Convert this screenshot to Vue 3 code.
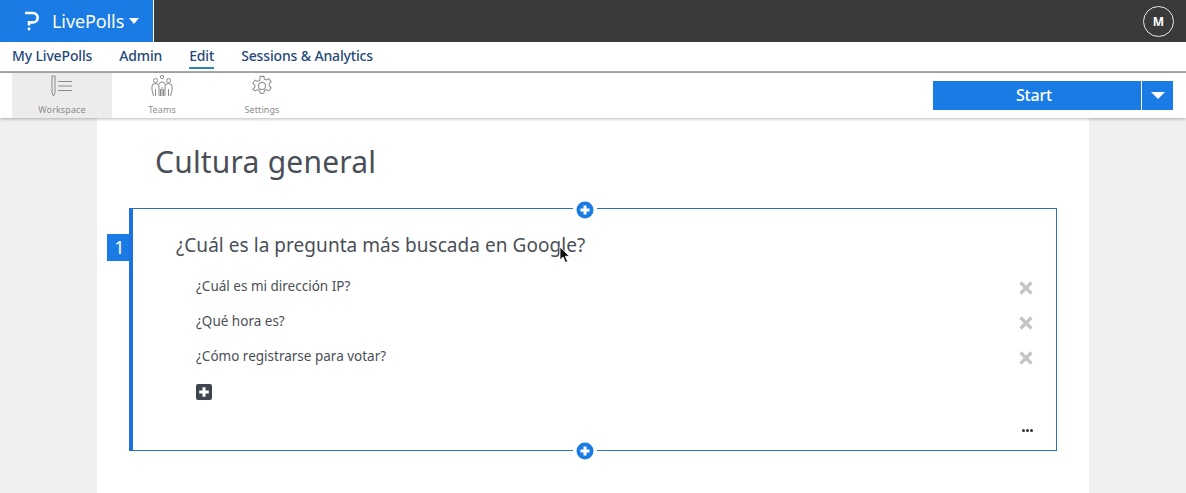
<script setup>
const tabs = [
  { key: 'w', label: 'Workspace', active: true },
  { key: 't', label: 'Teams' },
  { key: 's', label: 'Settings' }
]
const nav = ['My LivePolls', 'Admin', 'Edit', 'Sessions & Analytics']
const answers = ['¿Cuál es mi dirección IP?', '¿Qué hora es?', '¿Cómo registrarse para votar?']
</script>

<template>
  <div class="app">
    <header class="top">
      <div class="brand">
        <svg class="logo" width="14" height="20" viewBox="0 0 14 20" fill="none" stroke="#fff" stroke-width="2.6">
          <path d="M0 2h8a4.200 4.200 0 0 1 0 9.400H4v3" />
          <circle cx="4" cy="18" r="1.400" fill="#fff" stroke="none" />
        </svg>
        <span class="brand-name">LivePolls</span>
        <span class="caret"></span>
      </div>
      <div class="avatar">M</div>
    </header>

    <nav class="nav">
      <a v-for="n in nav" :key="n" class="nav-item" :class="{ on: n === 'Edit' }">{{ n }}</a>
    </nav>

    <div class="tools">
      <div v-for="t in tabs" :key="t.key" class="tab" :class="{ active: t.active }">
        <svg v-if="t.key === 'w'" width="24" height="22" viewBox="0 0 24 22" fill="none" stroke="#8a8a8a" stroke-width="1">
          <path d="M2 1h3v16.500L3.500 21 2 17.500z" />
          <path d="M8 6.500H22M8 11H22M8 15.500H22" />
        </svg>
        <svg v-else-if="t.key === 't'" width="24" height="22" viewBox="0 0 24 22" fill="none" stroke="#8a8a8a" stroke-width="1">
          <circle cx="12" cy="2" r="1.600" />
          <circle cx="5.500" cy="5.500" r="2" />
          <circle cx="18.500" cy="5.500" r="2" />
          <path d="M3.500 21l-1.500-6v-4q0-2.500 3.500-2.500T9 11v10M15 21V11q0-2.500 3.500-2.500T22 11v4l-1.500 6" />
          <path d="M9 9.500q0-2.500 3-2.500t3 2.500M12 12v9M10.500 14v7M13.500 14v7M5.500 14v7M18.500 14v7" />
        </svg>
        <svg v-else width="24" height="22" viewBox="0 0 24 24" fill="none" stroke="#8a8a8a" stroke-width="1.100">
          <path d="M10 1.500h4l.6 3 2.200 1 2.700-1.500 2.500 3.400-2.200 2.100v2.400l2.200 2.100-2.500 3.400-2.700-1.500-2.200 1-.6 3h-4l-.6-3-2.200-1-2.700 1.500L2 15.500l2.200-2.100V11L2 8.900l2.500-3.400L7.200 7l2.200-1z" />
          <circle cx="12" cy="12" r="3.800" />
        </svg>
        <span class="tab-label">{{ t.label }}</span>
      </div>
      <div class="start">
        <span class="start-main">Start</span>
        <span class="start-drop"><i class="drop-caret"></i></span>
      </div>
    </div>

    <main class="stage">
      <section class="page">
        <h1 class="title">Cultura general</h1>
        <div class="card">
          <span class="num">1</span>
          <span class="add add-top"><svg width="18" height="18" viewBox="0 0 18 18"><circle cx="9" cy="9" r="8.500" fill="#1a7be5" /><path d="M9 4.500v9M4.500 9h9" stroke="#fff" stroke-width="3" /></svg></span>
          <span class="add add-bottom"><svg width="18" height="18" viewBox="0 0 18 18"><circle cx="9" cy="9" r="8.500" fill="#1a7be5" /><path d="M9 4.500v9M4.500 9h9" stroke="#fff" stroke-width="3" /></svg></span>
          <svg class="cursor" width="12" height="18" viewBox="0 0 12 18"><path d="M1 1v13l3.200-3 2.200 5.500 2.200-.9-2.200-5.300H10.500z" fill="#111" stroke="#fff" stroke-width=".8" /></svg>

          <h2 class="question">¿Cuál es la pregunta más buscada en Google?</h2>
          <ul class="answers">
            <li v-for="a in answers" :key="a" class="answer">
              <span>{{ a }}</span>
              <svg width="14" height="14" viewBox="0 0 14 14"><path d="M1.500 1.500l11 11M12.500 1.500l-11 11" stroke="#c4c4c4" stroke-width="3.200" /></svg>
            </li>
          </ul>
          <div class="plus-box"><svg width="16" height="16" viewBox="0 0 16 16"><rect width="16" height="16" rx="2" fill="#41454e" /><path d="M8 3.200v9.600M3.200 8h9.600" stroke="#fff" stroke-width="3" /></svg></div>
          <div class="more"><i></i><i></i><i></i></div>
        </div>
      </section>
    </main>
  </div>
</template>

<style>
html, body { margin: 0; padding: 0; background: #efefef; overflow: hidden; }
</style>

<style scoped>
.app { width: 1186px; height: 493px; overflow: hidden; display: flex; flex-direction: column; font-family: "Noto Sans", "Open Sans", sans-serif; background: #efefef; }
.top { height: 42px; flex: none; background: #3a3a3a; display: flex; align-items: center; justify-content: space-between; }
.brand { width: 154px; height: 42px; background: #1a7be5; border-right: 1px solid #fff; display: flex; align-items: center; padding-left: 25px; box-sizing: border-box; color: #fff; }
.logo { flex: none; }
.brand-name { margin-left: 13px; font-size: 18px; letter-spacing: -.1px; }
.caret { margin-left: 5px; width: 0; height: 0; border: 5.500px solid transparent; border-top: 6px solid #fff; border-bottom: 0; }
.avatar { width: 31px; height: 31px; margin-right: 12px; border: 1.500px solid #e8e8e8; border-radius: 50%; color: #fff; font-size: 12px; font-weight: 700; display: flex; align-items: center; justify-content: center; box-sizing: border-box; }
.nav { height: 31px; flex: none; background: #fff; border-bottom: 2px solid #a9a9a9; box-sizing: border-box; display: flex; align-items: center; padding: 0 0 2px 12px; gap: 27px; }
.nav-item { font-size: 14px; color: #24497a; font-weight: 500; line-height: 20px; letter-spacing: -.15px; }
.nav-item.on { border-bottom: 2px solid #2a86b5; margin-bottom: -4px; padding-bottom: 1px; }
.tools { height: 45px; flex: none; background: #fff; box-shadow: 0 1px 3px rgba(0,0,0,.28); display: flex; padding-left: 12px; position: relative; z-index: 1; }
.tab { width: 100px; display: flex; flex-direction: column; align-items: center; padding-top: 2px; box-sizing: border-box; }
.tab.active { background: #ececec; }
.tab-label { font-size: 9px; color: #8c8c8c; line-height: 12px; margin-top: 7px; letter-spacing: .1px; }
.start { margin-left: auto; margin-right: 13px; margin-top: 8px; width: 240px; height: 29px; display: flex; background: #1a7be5; color: #fff; }
.start-main { flex: 1; text-align: center; font-size: 16px; font-weight: 500; line-height: 29px; padding-right: 6px; letter-spacing: -.2px; }
.start-drop { width: 32px; border-left: 1px solid #fff; display: flex; align-items: center; justify-content: center; box-sizing: border-box; }
.drop-caret { width: 0; height: 0; border: 7px solid transparent; border-top: 7px solid #fff; border-bottom: 0; }
.stage { flex: 1; display: flex; padding-left: 97px; }
.page { width: 992px; background: #fff; padding: 23px 32px 0; box-sizing: border-box; }
.title { margin: 0 0 26px 26px; font-size: 30px; font-weight: 400; color: #4a4f57; line-height: 41px; letter-spacing: .2px; }
.card { position: relative; width: 928px; height: 243px; box-sizing: border-box; border: 1px solid #2f72b0; border-left: 4px solid #1a72dc; padding: 23px 23px 0 43px; }
.num { position: absolute; left: -26px; top: 25px; width: 22px; height: 27px; padding-left: 3px; box-sizing: border-box; background: #1a7be5; color: #fff; font-size: 18px; line-height: 27px; text-align: center; }
.add { position: absolute; left: 440px; width: 18px; height: 18px; background: #fff; padding: 0 3px; display: block; }
.add svg { display: block; }
.add-top { top: -8px; }
.add-bottom { bottom: -10px; }
.cursor { position: absolute; left: 426px; top: 37px; }
.question { margin: 0; font-size: 19px; font-weight: 400; line-height: 27px; color: #4a4f57; letter-spacing: .05px; }
.answers { list-style: none; margin: 9px 0 0; padding: 0 0 0 20px; }
.answer { height: 35px; display: flex; align-items: center; justify-content: space-between; font-size: 13.500px; color: #4a4f57; }
.answer svg { margin-top: 5px; }
.plus-box { margin: 11px 0 0 20px; height: 16px; }
.plus-box svg { display: block; }
.more { position: absolute; right: 23px; bottom: 18px; display: flex; gap: 1px; }
.more i { width: 3px; height: 3px; border-radius: 50%; background: #333; display: block; }
</style>
